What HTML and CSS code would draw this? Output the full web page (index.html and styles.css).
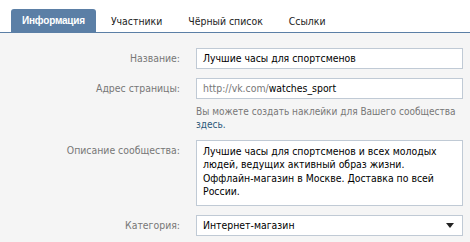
FILE: index.html
```html
<!DOCTYPE html>
<html>
  <head>
    <meta charset="utf-8">
    <link rel="stylesheet" href="styles.css">
  </head>
  <body>
    <div class="tabs">
      <a class="tab active">Информация</a>
      <a class="tab">Участники</a>
      <a class="tab">Чёрный список</a>
      <a class="tab">Ссылки</a>
    </div>

    <div class="panel">
      <div class="form">
        <div class="label">Название:</div>
        <div class="field">Лучшие часы для спортсменов</div>

        <div class="label">Адрес страницы:</div>
        <div>
          <div class="field"><span class="muted">http://vk.com/</span>watches_sport</div>
          <div class="help">
            Вы можете создать наклейки для Вашего сообщества<br>
            <a class="link">здесь.</a>
          </div>
        </div>

        <div class="label">Описание сообщества:</div>
        <div class="field area">Лучшие часы для спортсменов и всех молодых<br>людей, ведущих активный образ жизни.<br>Оффлайн-магазин в Москве. Доставка по всей<br>России.</div>

        <div class="label">Категория:</div>
        <div class="field select">
          <span>Интернет-магазин</span>
          <svg class="arrow" width="8" height="5" viewBox="0 0 8 5"><path d="M0 0h8L4 5z" fill="#222"/></svg>
        </div>
      </div>
    </div>
  </body>
</html>
```

FILE: styles.css
```css
body {
  margin: 0;
  background: #fff;
  font-family: "DejaVu Sans Condensed", "Liberation Sans", sans-serif;
  font-size: 10.4px;
  color: #222;
}

/* Tabs */
.tabs {
  display: flex;
  gap: 4px;
  padding: 9px 0 0 11px;
  border-bottom: 1px solid #5b7fa6;
}

.tab {
  display: block;
  height: 23px;
  line-height: 24px;
  padding: 0 11px;
  color: #222;
  border-radius: 3px 3px 0 0;
  cursor: pointer;
}

.tab.active {
  background: #5b7fa6;
  color: #fff;
  font-family: "Liberation Sans", sans-serif;
  font-size: 10px;
  letter-spacing: -0.2px;
  font-weight: bold;
}

/* Form */
.panel {
  background: #f5f5f5;
  padding: 15px 0 6px;
}

.form {
  display: grid;
  grid-template-columns: 180px 267px;
  column-gap: 16px;
  row-gap: 9px;
  align-items: start;
}

.label {
  text-align: right;
  line-height: 21px;
  color: #777;
}

.field {
  height: 21px;
  box-sizing: border-box;
  line-height: 19px;
  padding: 0 6px;
  background: #fff;
  border: 1px solid #c0cad5;
  color: #000;
  white-space: nowrap;
}

.muted {
  color: #777;
}

.help {
  margin-top: 6px;
  font-size: 10px;
  line-height: 13px;
  color: #777;
}

.link {
  color: #2b587a;
}

.field.area {
  height: 66px;
  padding: 4px 6px;
  line-height: 13.3px;
}

.field.select {
  display: flex;
  align-items: center;
  justify-content: space-between;
  padding-right: 8px;
}
```
